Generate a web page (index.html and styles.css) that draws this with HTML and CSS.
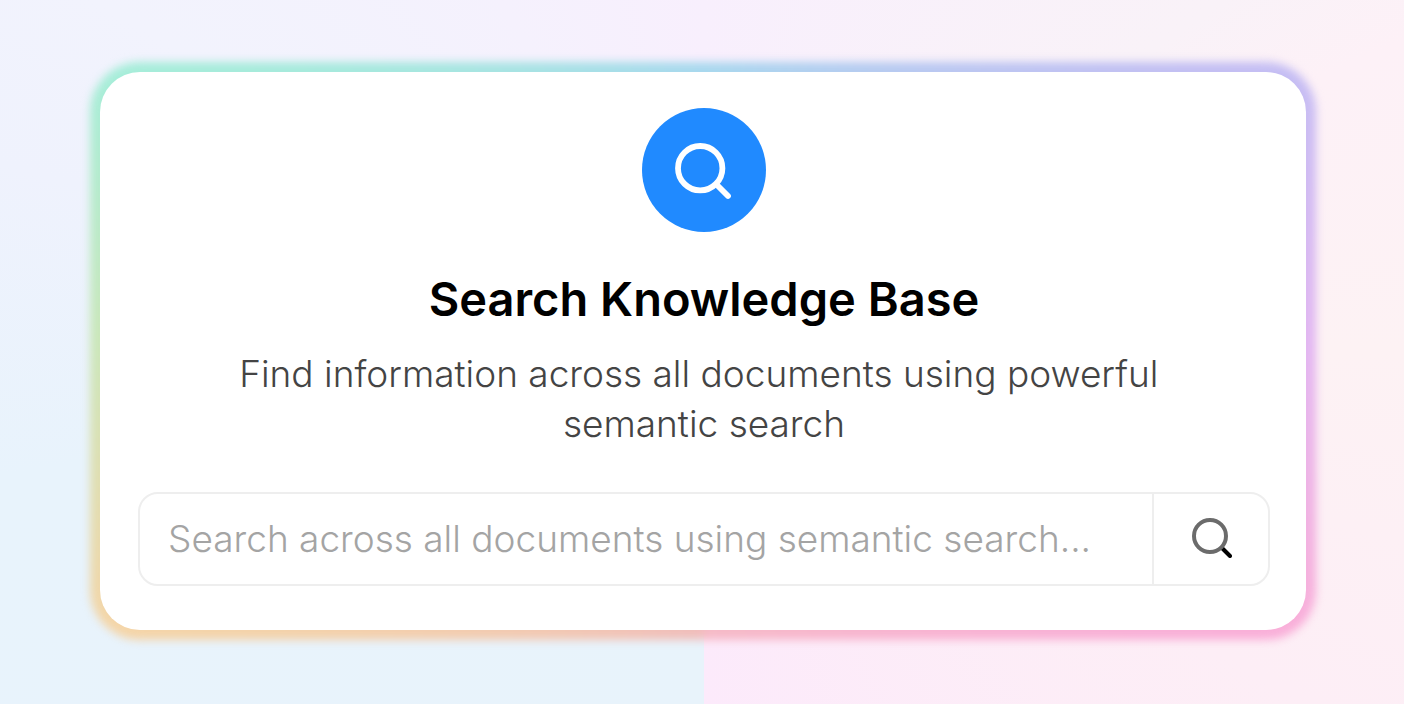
FILE: index.html
```html
<!DOCTYPE html>
<html lang="en">
<head>
<meta charset="utf-8">
<meta name="viewport" content="width=device-width, initial-scale=1">
<title>Search Knowledge Base</title>
<link rel="stylesheet" href="styles.css">
</head>
<body>
<main class="page">
  <section class="card">
    <div class="badge">
      <svg class="badge-icon" viewBox="0 0 64 64" fill="none" stroke="currentColor" stroke-width="5.8" stroke-linecap="round" aria-hidden="true">
        <circle cx="28.2" cy="30.2" r="22.2"/>
        <path d="M44.5 46.5 L56 58"/>
      </svg>
    </div>
    <h1 class="title">Search Knowledge Base</h1>
    <p class="subtitle">Find information across all documents using powerful semantic search</p>
    <form class="search" role="search">
      <input class="search-input" type="search" aria-label="Search documents" placeholder="Search across all documents using semantic search...">
      <button class="search-button" type="submit" aria-label="Search">
        <svg class="search-icon" viewBox="0 0 40 40" fill="none" stroke-width="4" aria-hidden="true">
          <path d="M30 30 L38 38" stroke="#000" stroke-linecap="round"/>
          <circle cx="18" cy="18" r="16" stroke="#6b6b6b"/>
        </svg>
      </button>
    </form>
  </section>
</main>
</body>
</html>
```

FILE: styles.css
```css
* {
  box-sizing: border-box;
}

body {
  margin: 0;
  font-family: Inter, "Liberation Sans", sans-serif;
}

.page {
  min-height: 100vh;
  padding: 72px 98px 72px 100px;
  background: conic-gradient(from 180deg at calc(50% + 2px) 50%,
    #e8f3fb 0deg,
    #e8f3fc 80deg,
    #eff2fd 105deg,
    #f2f3fd 120deg,
    #f8effd 180deg,
    #f9f2f8 236deg,
    #fdf1f7 246deg,
    #fdf2f4 270deg,
    #fdeef6 300deg,
    #fceafb 360deg);
}

.card {
  position: relative;
  z-index: 0;
  display: flex;
  flex-direction: column;
  align-items: center;
  padding: 36px 36px 44px 38px;
  border-radius: 40px;
}

.card::before,
.card::after {
  content: "";
  position: absolute;
  z-index: -1;
}

.card::before {
  inset: -10px;
  border-radius: 50px;
  background: conic-gradient(from 180deg,
    #f0bdbb 0deg,
    #f4d5a8 65deg,
    #c9e7bb 92deg,
    #a6edd9 115deg,
    #a8d8ee 180deg,
    #c5bdf3 245deg,
    #e3b6f1 270deg,
    #f9afd9 295deg,
    #f6bac6 360deg);
  filter: blur(4px);
}

.card::after {
  inset: 0;
  border-radius: 40px;
  background: #fff;
}

.badge {
  display: grid;
  place-items: center;
  width: 124px;
  height: 124px;
  border-radius: 50%;
  background: #208aff;
  color: #fff;
}

.badge-icon {
  width: 64px;
  height: 64px;
}

.title {
  margin: 35px 0 18px;
  font-size: 47px;
  font-weight: 600;
  line-height: 64px;
  color: #000;
  text-align: center;
}

.subtitle {
  max-width: 1000px;
  margin: 0;
  font-size: 37px;
  font-weight: 300;
  line-height: 50px;
  color: #444;
  text-align: center;
  white-space: break-spaces;
}

.search {
  display: flex;
  align-self: stretch;
  height: 94px;
  margin-top: 43px;
  border: 2px solid #eee;
  border-radius: 20px;
  overflow: hidden;
}

.search-input {
  flex: 1;
  min-width: 0;
  padding: 0 28px 2px;
  border: 0;
  outline: 0;
  background: transparent;
  font: inherit;
  font-size: 37px;
  font-weight: 300;
  color: #444;
  appearance: none;
}

.search-input::placeholder {
  color: #a4a4a4;
  opacity: 1;
}

.search-button {
  display: grid;
  place-items: center;
  width: 116px;
  padding: 0 0 2px 2px;
  border: 0;
  border-left: 2px solid #eee;
  background: transparent;
  cursor: pointer;
}

.search-icon {
  width: 40px;
  height: 40px;
}
```
